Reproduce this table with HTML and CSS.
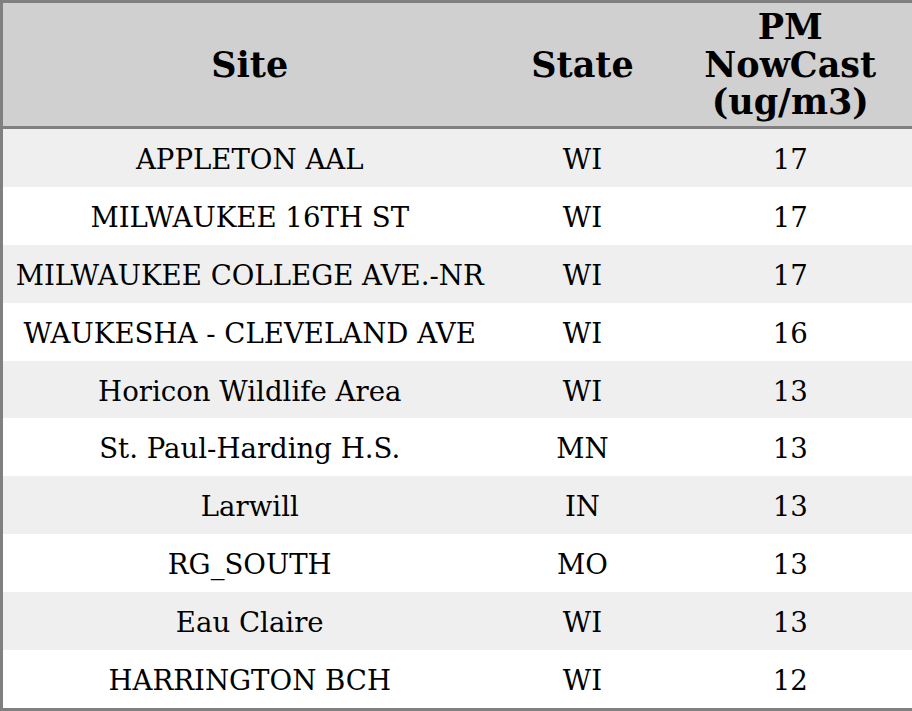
FILE: index.html
```html
<!DOCTYPE html>
<html>
<head>
<meta charset="utf-8">
<link rel="stylesheet" href="styles.css">
</head>
<body>
<table class="aq">
  <colgroup>
    <col class="c-site">
    <col class="c-state">
    <col class="c-pm">
  </colgroup>
  <thead>
    <tr><th>Site</th><th>State</th><th>PM<br>NowCast<br>(ug/m3)</th></tr>
  </thead>
  <tbody>
    <tr><td>APPLETON AAL</td><td>WI</td><td>17</td></tr>
    <tr><td>MILWAUKEE 16TH ST</td><td>WI</td><td>17</td></tr>
    <tr><td>MILWAUKEE COLLEGE AVE.-NR</td><td>WI</td><td>17</td></tr>
    <tr><td>WAUKESHA - CLEVELAND AVE</td><td>WI</td><td>16</td></tr>
    <tr><td>Horicon Wildlife Area</td><td>WI</td><td>13</td></tr>
    <tr><td>St. Paul-Harding H.S.</td><td>MN</td><td>13</td></tr>
    <tr><td>Larwill</td><td>IN</td><td>13</td></tr>
    <tr><td>RG_SOUTH</td><td>MO</td><td>13</td></tr>
    <tr><td>Eau Claire</td><td>WI</td><td>13</td></tr>
    <tr><td>HARRINGTON BCH</td><td>WI</td><td>12</td></tr>
  </tbody>
</table>
</body>
</html>
```
FILE: styles.css
```css
html, body {
  margin: 0;
  padding: 0;
  background: #ffffff;
}
.aq {
  width: 912px;
  height: 711px;
  border-collapse: collapse;
  border: 3px solid #808080;
  font-family: "DejaVu Serif", serif;
  color: #000;
  table-layout: fixed;
}
.c-site { width: 495px; }
.c-state { width: 172px; }
.c-pm { width: 245px; }
.aq th {
  background: #d0d0d0;
  font-size: 35px;
  font-weight: bold;
  line-height: 37.5px;
  height: 123px;
  padding: 0;
  border-bottom: 3px solid #808080;
  text-align: center;
  vertical-align: middle;
}
.aq td {
  font-size: 27.6px;
  text-align: center;
  vertical-align: middle;
  padding: 3px 0 0;
  height: 54px;
}
.aq tbody tr:nth-child(odd) td {
  background: #efefef;
}
```
